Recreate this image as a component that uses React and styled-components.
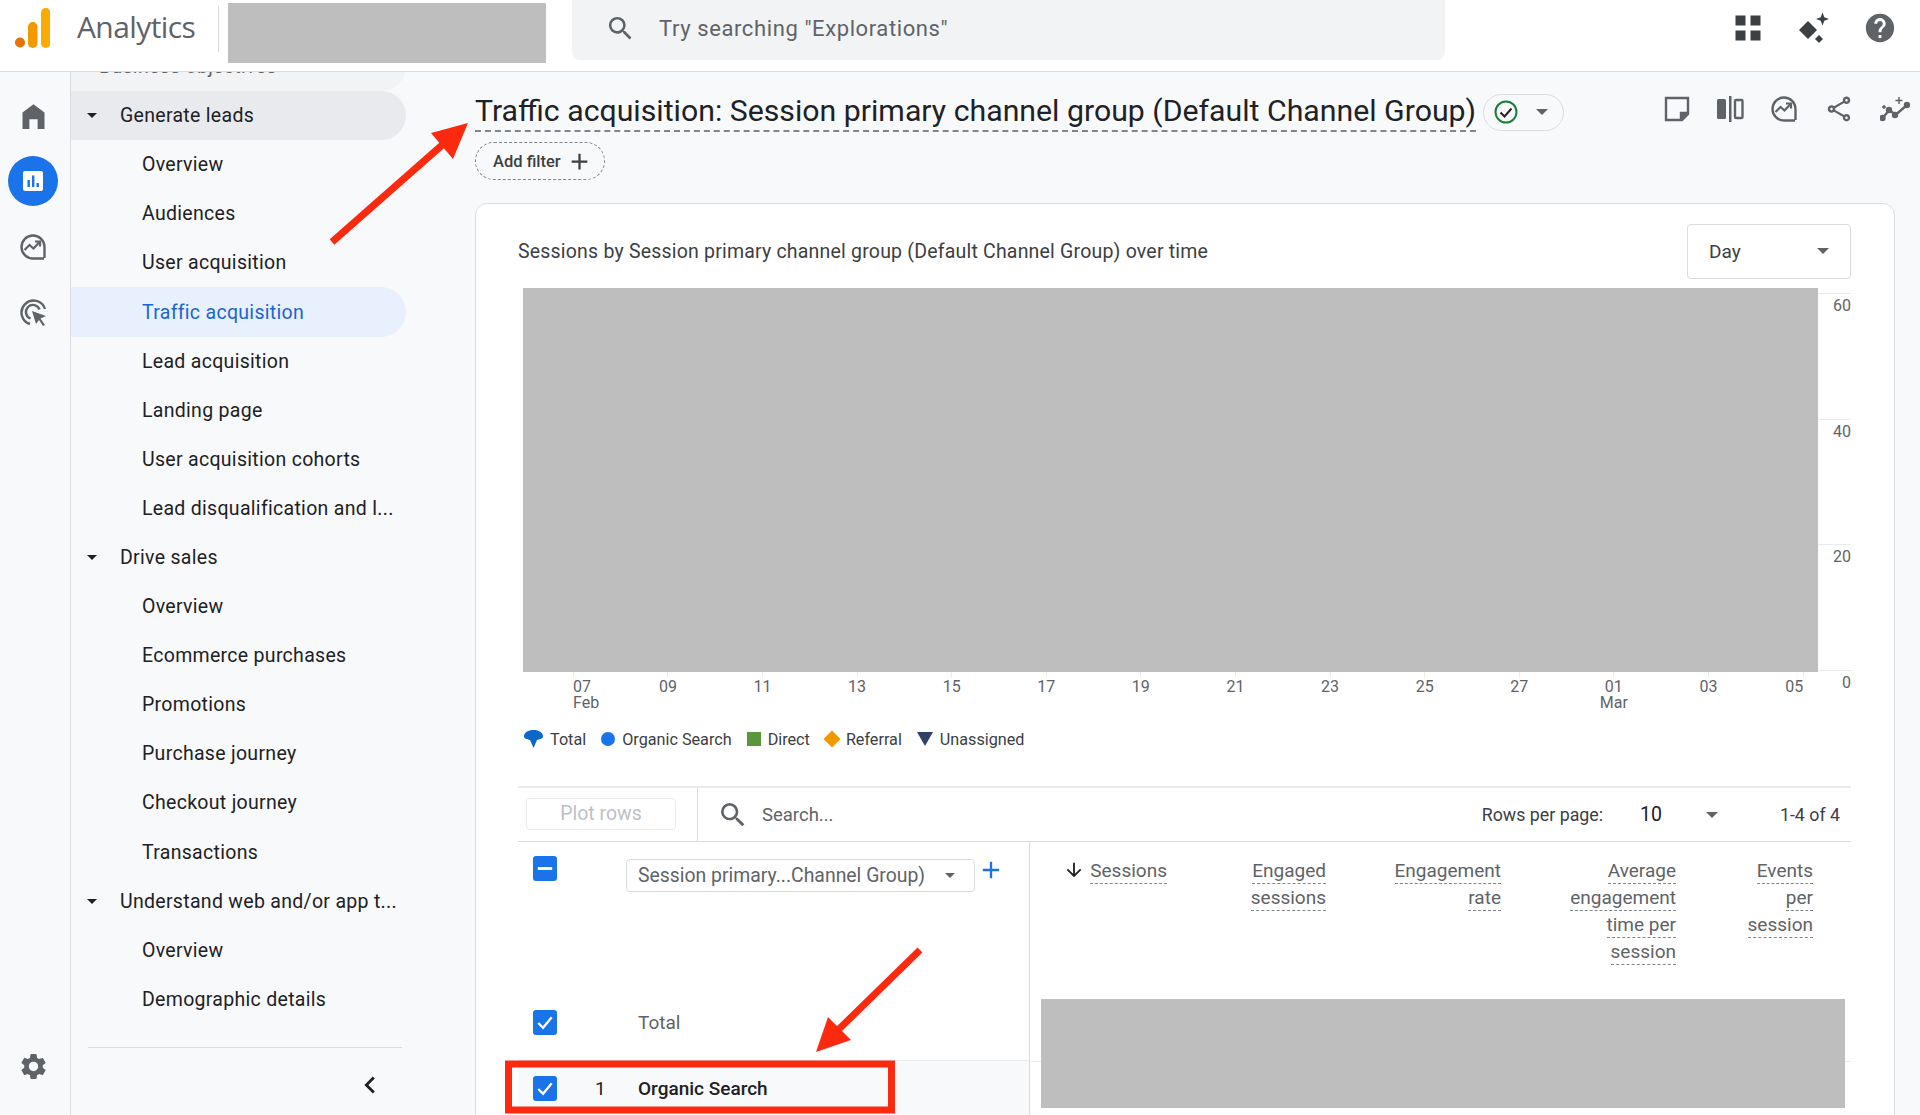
import React from 'react'
import styled, { createGlobalStyle } from 'styled-components'
import { MdSettings, MdHelp, MdSearch, MdChevronLeft, MdOutlineShare, MdAdd, MdArrowDownward } from 'react-icons/md'

const navRows = [
    { label: 'Business objectives', level: 0, faded: true },
    { label: 'Generate leads', level: 0, open: true, hilite: true },
    { label: 'Overview', level: 1 },
    { label: 'Audiences', level: 1 },
    { label: 'User acquisition', level: 1 },
    { label: 'Traffic acquisition', level: 1, active: true },
    { label: 'Lead acquisition', level: 1 },
    { label: 'Landing page', level: 1 },
    { label: 'User acquisition cohorts', level: 1 },
    { label: 'Lead disqualification and l...', level: 1 },
    { label: 'Drive sales', level: 0, open: true },
    { label: 'Overview', level: 1 },
    { label: 'Ecommerce purchases', level: 1 },
    { label: 'Promotions', level: 1 },
    { label: 'Purchase journey', level: 1 },
    { label: 'Checkout journey', level: 1 },
    { label: 'Transactions', level: 1 },
    { label: 'Understand web and/or app t...', level: 0, open: true },
    { label: 'Overview', level: 1 },
    { label: 'Demographic details', level: 1 },
]

const ticks = [
    { day: '07', month: 'Feb', align: 'first' },
    { day: '09' }, { day: '11' }, { day: '13' }, { day: '15' }, { day: '17' },
    { day: '19' }, { day: '21' }, { day: '23' }, { day: '25' }, { day: '27' },
    { day: '01', month: 'Mar' }, { day: '03' }, { day: '05', align: 'last' },
]

const columns = [
    { width: 137, lines: ['Sessions'], sorted: true },
    { width: 159, lines: ['Engaged', 'sessions'] },
    { width: 175, lines: ['Engagement', 'rate'] },
    { width: 175, lines: ['Average', 'engagement', 'time per', 'session'] },
    { width: 137, lines: ['Events', 'per', 'session'] },
]

const Logo = () => (
    <svg width="35" height="40" viewBox="0 0 35 40">
        <circle cx="5" cy="34.5" r="5" fill="#e8710a" />
        <rect x="13" y="14" width="9.5" height="26" rx="4.7" fill="#f29900" />
        <rect x="26" y="0" width="9.5" height="40" rx="4.7" fill="#f9ab00" />
    </svg>
)

const HomeIcon = () => (
    <svg width="33" height="33" viewBox="0 0 24 24" fill="#5f6368">
        <path d="M12 3L4 9v12h5v-7h6v7h5V9z" />
    </svg>
)

const ReportsIcon = () => (
    <svg width="24" height="24" viewBox="0 0 24 24">
        <rect x="2" y="2" width="20" height="20" rx="2" fill="#fff" />
        <rect x="6.5" y="11" width="2.4" height="7" fill="#1a73e8" />
        <rect x="11" y="6.5" width="2.4" height="11.5" fill="#1a73e8" />
        <rect x="15.5" y="14" width="2.4" height="4" fill="#1a73e8" />
    </svg>
)

const ExploreIcon = ({ size = 28 }) => (
    <svg width={size} height={size} viewBox="0 0 28 28" fill="none" stroke="#5f6368" strokeWidth="2.4">
        <path d="M25 25.5H14A11.5 11.5 0 1 1 25.5 14v11" />
        <path d="M5.5 17l5-5 4 3.5 6-6.5" strokeWidth="2.2" />
        <path d="M16 8.5h5v5" strokeWidth="2.2" />
    </svg>
)

const AdsIcon = () => (
    <svg width="28" height="28" viewBox="0 0 28 28" fill="none" stroke="#5f6368" strokeWidth="2.4">
        <path d="M11 26A12 12 0 1 1 26 11" />
        <path d="M11.5 20.5A7 7 0 1 1 20.5 11.5" />
        <path d="M13 13l14 5-5.5 2.5L26 27l-2 1-4-6-3 4z" fill="#5f6368" stroke="none" />
    </svg>
)

const AppsIcon = () => (
    <svg width="26" height="26" viewBox="0 0 26 26" fill="#3c4043">
        <rect x="0.5" y="0.5" width="10" height="10" />
        <rect x="15.5" y="0.5" width="10" height="10" />
        <rect x="0.5" y="15.5" width="10" height="10" />
        <rect x="15.5" y="15.5" width="10" height="10" />
    </svg>
)

const SparkleIcon = () => (
    <svg width="32" height="32" viewBox="0 0 32 32" fill="#3c4043">
        <path d="M10 9l9 9-9 9-9-9z" />
        <path d="M24.500 0.500l1.800 4.700 4.700 1.800-4.700 1.800-1.800 4.700-1.800-4.700-4.700-1.800 4.700-1.800z" />
        <path d="M21 23l4 4-4 4-4-4z" />
    </svg>
)

const NoteIcon = () => (
    <svg width="26" height="26" viewBox="0 0 26 26" fill="none" stroke="#5f6368" strokeWidth="2.4">
        <path d="M2 2h22v16l-6 6H2z" />
        <path d="M17 24v-7h7" fill="#5f6368" />
    </svg>
)

const CompareIcon = () => (
    <svg width="28" height="28" viewBox="0 0 28 28" fill="#5f6368">
        <rect x="1" y="4" width="9" height="20" rx="1.500" />
        <rect x="13" y="1" width="2.500" height="26" />
        <rect x="19" y="5" width="7.500" height="18" rx="1" fill="none" stroke="#5f6368" strokeWidth="2.400" />
    </svg>
)

const InsightsIcon = () => (
    <svg width="30" height="28" viewBox="0 0 30 28" fill="none" stroke="#5f6368" strokeWidth="2.400">
        <path d="M2.500 23l7-8 6 5 11.500-10" />
        <circle cx="2.500" cy="23" r="2" fill="#5f6368" />
        <circle cx="9" cy="15" r="2" fill="#5f6368" />
        <circle cx="15" cy="20" r="2" fill="#5f6368" />
        <circle cx="27" cy="10" r="2" fill="#5f6368" />
        <path d="M19 2v7M15.500 5.500h7M4 10v4M2 12h4" strokeWidth="1.500" />
    </svg>
)

const CheckCircle = () => (
    <svg width="24" height="24" viewBox="0 0 24 24" fill="none" stroke="#188038" strokeWidth="2">
        <circle cx="12" cy="12" r="10.500" />
        <path d="M6.500 12.500l4 4 7-8" stroke="#202124" />
    </svg>
)

const CheckBox = ({ mixed }) => (
    <BoxMark>
        <svg width="25" height="25" viewBox="0 0 25 25" fill="none" stroke="#fff" strokeWidth="2.400">
            {mixed ? <path d="M5 12.500h15" strokeWidth="3" /> : <path d="M5.500 13l5 5 9-11" />}
        </svg>
    </BoxMark>
)

const TotalMark = () => (
    <svg width="19" height="18" viewBox="0 0 19 18" fill="#0b68cb">
        <path d="M9.500 0C4 0 0 2.500 0 6.500c0 2 3 2.500 6 3.500l3.500 8 3.500-8c3-1 6-1.500 6-3.500C19 2.500 15 0 9.500 0z" />
    </svg>
)

const App = () => {
    return (
        <Page>
            <GlobalStyle />
            <TopBar>
                <LogoWrap><Logo /></LogoWrap>
                <Product>Analytics</Product>
                <TopDivider />
                <Account />
                <SearchBox>
                    <MdSearch size={31} color="#5f6368" />
                    <SearchHint>Try searching "Explorations"</SearchHint>
                </SearchBox>
                <TopIcons>
                    <TopIcon><AppsIcon /></TopIcon>
                    <TopIcon><SparkleIcon /></TopIcon>
                    <TopIcon><MdHelp size={34} color="#5f6368" /></TopIcon>
                </TopIcons>
            </TopBar>
            <Body>
                <Rail>
                    <RailSlot><HomeIcon /></RailSlot>
                    <RailSlot $active><ReportsIcon /></RailSlot>
                    <RailSlot><ExploreIcon /></RailSlot>
                    <RailSlot><AdsIcon /></RailSlot>
                    <RailGear><MdSettings size={31} color="#5f6368" /></RailGear>
                </Rail>
                <Sidebar>
                    <NavScroll>
                        {navRows.map((row, i) => (
                            <NavRow key={i} $level={row.level} $active={row.active} $hilite={row.hilite} $faded={row.faded}>
                                {row.open && <NavCaret />}
                                {row.label}
                            </NavRow>
                        ))}
                    </NavScroll>
                    <SideFooter>
                        <MdChevronLeft size={34} color="#202124" />
                    </SideFooter>
                </Sidebar>
                <Main>
                    <TitleRow>
                        <Title>Traffic acquisition: Session primary channel group (Default Channel Group)</Title>
                        <StatusChip>
                            <CheckCircle />
                            <Caret $color="#5f6368" />
                        </StatusChip>
                        <TitleTools>
                            <NoteIcon />
                            <CompareIcon />
                            <ExploreIcon size={28} />
                            <MdOutlineShare size={30} color="#5f6368" />
                            <InsightsIcon />
                        </TitleTools>
                    </TitleRow>
                    <FilterChip>Add filter <MdAdd size={27} color="#3c4043" /></FilterChip>
                    <Card>
                        <ChartHead>
                            <ChartTitle>Sessions by Session primary channel group (Default Channel Group) over time</ChartTitle>
                            <DaySelect>Day<Caret $color="#5f6368" /></DaySelect>
                        </ChartHead>
                        <ChartRow>
                            <Redacted $w={1295} $h={384} />
                            <YAxis>
                                {['60', '40', '20', '0'].map(v => <YLabel key={v}>{v}</YLabel>)}
                            </YAxis>
                        </ChartRow>
                        <XAxis>
                            {ticks.map(t => (
                                <XTick key={t.day} $align={t.align}>
                                    <span>{t.day}</span>
                                    {t.month && <span>{t.month}</span>}
                                </XTick>
                            ))}
                        </XAxis>
                        <Legend>
                            <LegendItem><TotalMark />Total</LegendItem>
                            <LegendItem><Dot />Organic Search</LegendItem>
                            <LegendItem><Square />Direct</LegendItem>
                            <LegendItem><Diamond />Referral</LegendItem>
                            <LegendItem><Triangle />Unassigned</LegendItem>
                        </Legend>
                        <TableBar>
                            <PlotCell><PlotButton>Plot rows</PlotButton></PlotCell>
                            <TableSearch>
                                <MdSearch size={32} color="#5f6368" />
                                <span>Search...</span>
                            </TableSearch>
                            <Pager>
                                <span>Rows per page:</span>
                                <PageSize>10</PageSize>
                                <Caret $color="#5f6368" />
                                <PageRange>1-4 of 4</PageRange>
                            </Pager>
                        </TableBar>
                        <TableBody>
                            <DimCol>
                                <DimHead>
                                    <CheckBox mixed />
                                    <DimSelect>Session primary...Channel Group)<Caret $color="#5f6368" $small /></DimSelect>
                                    <MdAdd size={28} color="#1a73e8" />
                                </DimHead>
                                <DimRow $h={62}>
                                    <CheckBox />
                                    <RowName $muted>Total</RowName>
                                </DimRow>
                                <DimRow $h={54} $tinted>
                                    <CheckBox />
                                    <RowIndex>1</RowIndex>
                                    <RowName>Organic Search</RowName>
                                </DimRow>
                            </DimCol>
                            <MetricCol>
                                <MetricHead>
                                    {columns.map(c => (
                                        <MetricCell key={c.lines[0]} $w={c.width}>
                                            {c.lines.map(line => (
                                                <MetricLine key={line}>
                                                    {c.sorted && <MdArrowDownward size={22} color="#202124" />}
                                                    <u>{line}</u>
                                                </MetricLine>
                                            ))}
                                        </MetricCell>
                                    ))}
                                </MetricHead>
                                <MetricData><Redacted $w={804} $h={109} /></MetricData>
                            </MetricCol>
                        </TableBody>
                    </Card>
                </Main>
            </Body>
            <Callouts width="1920" height="1115" viewBox="0 0 1920 1115">
                <path d="M332 242L449 139" stroke="#fb2a0f" strokeWidth="7" fill="none" />
                <path d="M468 123L431 133L453 159z" fill="#fb2a0f" />
                <path d="M920 950L836 1032" stroke="#fb2a0f" strokeWidth="7" fill="none" />
                <path d="M816 1052L828 1017L851 1040z" fill="#fb2a0f" />
                <rect x="508.500" y="1064" width="383" height="46" fill="none" stroke="#fb2a0f" strokeWidth="7" />
            </Callouts>
        </Page>
    )
}

export default App

const GlobalStyle = createGlobalStyle`
    html, body {
        margin: 0;
        padding: 0;
        background: #f8f9fa;
        font-family: Roboto, "Liberation Sans", sans-serif;
        color: #202124;
    }
    * { box-sizing: border-box; }
`;

const Page = styled.div`
    position: relative;
    width: 1920px;
    height: 1115px;
    overflow: hidden;
    display: flex;
    flex-direction: column;
`;
const TopBar = styled.header`
    height: 72px;
    flex: none;
    display: flex;
    background: #fff;
    border-bottom: 1px solid #dadce0;
    position: relative;
    z-index: 2;
`;
const LogoWrap = styled.div`
    padding: 8px 0 0 15px;
`;
const Product = styled.div`
    margin: 7px 0 0 27px;
    width: 137px;
    font-family: "Open Sans", sans-serif;
    font-size: 30px;
    line-height: 40px;
    letter-spacing: -0.6px;
    color: #5f6368;
`;
const TopDivider = styled.div`
    width: 1px;
    height: 46px;
    margin: 6px 9px 0 4px;
    background: #dadce0;
`;
const Account = styled.div`
    width: 318px;
    height: 60px;
    margin-top: 3px;
    background: #bebebe;
`;
const SearchBox = styled.div`
    width: 873px;
    height: 60px;
    margin-left: 26px;
    padding: 0 0 3px 33px;
    display: flex;
    align-items: center;
    gap: 23px;
    background: #f1f3f4;
    border-radius: 0 0 8px 8px;
`;
const SearchHint = styled.span`
    font-size: 22px;
    letter-spacing: 0.6px;
    color: #5f6368;
`;
const TopIcons = styled.div`
    margin-left: auto;
    height: 56px;
    padding-right: 23px;
    display: flex;
    align-items: center;
    gap: 32px;
`;
const TopIcon = styled.div`
    width: 34px;
    display: flex;
    justify-content: center;
`;
const Body = styled.div`
    flex: 1;
    min-height: 0;
    display: flex;
`;
const Rail = styled.nav`
    width: 71px;
    flex: none;
    display: flex;
    flex-direction: column;
    align-items: center;
    padding: 19px 4px 0 0;
    gap: 15.300px;
    border-right: 1px solid #dadce0;
`;
const RailSlot = styled.div`
    width: 50px;
    height: 50px;
    display: flex;
    align-items: center;
    justify-content: center;
    border-radius: 50%;
    background: ${p => (p.$active ? '#1a73e8' : 'transparent')};
`;
const RailGear = styled(RailSlot)`
    margin-top: auto;
    margin-bottom: 24px;
`;
const Sidebar = styled.aside`
    width: 404px;
    flex: none;
    display: flex;
    flex-direction: column;
`;
const NavScroll = styled.div`
    height: 975px;
    overflow: hidden;
    width: 335px;
    flex: none;
    & > :first-child { margin-top: -30px; }
`;
const NavRow = styled.div`
    position: relative;
    height: 49.100px;
    display: flex;
    align-items: center;
    padding-left: ${p => (p.$faded ? '28px' : p.$level ? '71px' : '49px')};
    font-size: 19.500px;
    letter-spacing: 0.3px;
    color: ${p => (p.$active ? '#1967d2' : p.$faded ? '#5f6368' : '#202124')};
    background: ${p => (p.$active ? '#e8f0fe' : p.$hilite ? '#e8eaed' : p.$faded ? '#f1f3f4' : 'transparent')};
    border-radius: 0 25px 25px 0;
`;
const NavCaret = styled.i`
    position: absolute;
    left: 16px;
    top: 22px;
    border-style: solid;
    border-width: 5px 5px 0 5px;
    border-color: #202124 transparent transparent transparent;
`;
const SideFooter = styled.div`
    margin: 0 0 0 17px;
    width: 314px;
    flex: 1;
    border-top: 1px solid #dadce0;
    display: flex;
    justify-content: flex-end;
    padding: 20px 15px 0 0;
`;
const Main = styled.main`
    flex: 1;
    min-width: 0;
    padding: 19px 25px 0 0;
`;
const TitleRow = styled.div`
    height: 40px;
    display: flex;
    align-items: center;
`;
const Title = styled.h1`
    margin: 0;
    font-size: 30.250px;
    font-weight: 400;
    line-height: 39px;
    white-space: nowrap;
    border-bottom: 2px dashed #80868b;
    color: #202124;
    width: 1001px;
`;
const StatusChip = styled.div`
    width: 81px;
    height: 37px;
    margin: 2px 0 0 7px;
    padding: 0 15px 0 10px;
    display: flex;
    align-items: center;
    justify-content: space-between;
    border: 1px solid #dadce0;
    border-radius: 19px;
`;
const Caret = styled.i`
    display: block;
    flex: none;
    border-style: solid;
    border-width: ${p => (p.$small ? '5px 5px 0 5px' : '6px 6.500px 0 6.500px')};
    border-color: ${p => p.$color} transparent transparent transparent;
`;
const TitleTools = styled.div`
    margin-left: auto;
    display: flex;
    align-items: center;
    gap: 26px;
    margin-right: -15px;
    margin-top: -4px;
`;
const FilterChip = styled.div`
    width: 130px;
    height: 38px;
    margin-top: 11px;
    padding: 0 0 0 17px;
    display: flex;
    align-items: center;
    gap: 5px;
    font-size: 16.500px;
    font-weight: 500;
    color: #3c4043;
    border: 1px dashed #80868b;
    border-radius: 19px;
`;
const Card = styled.section`
    margin-top: 23px;
    height: 960px;
    padding: 19px 43px 0 42px;
    background: #fff;
    border: 1px solid #dadce0;
    border-radius: 12px;
`;
const ChartHead = styled.div`
    display: flex;
    align-items: center;
    justify-content: space-between;
    height: 56px;
`;
const ChartTitle = styled.div`
    font-size: 19.500px;
    letter-spacing: 0.2px;
    color: #3c4043;
`;
const DaySelect = styled.div`
    width: 164px;
    height: 55px;
    padding: 0 21px;
    display: flex;
    align-items: center;
    justify-content: space-between;
    font-size: 19px;
    border: 1px solid #dadce0;
    border-radius: 4px;
    color: #3c4043;
`;
const ChartRow = styled.div`
    display: flex;
    height: 384px;
    margin: 9px 0 0 5px;
`;
const Redacted = styled.div`
    width: ${p => p.$w}px;
    height: ${p => p.$h}px;
    flex: none;
    background: #bebebe;
`;
const YAxis = styled.div`
    flex: 1;
    height: 384px;
    padding-top: 5px;
`;
const YLabel = styled.div`
    height: 125.500px;
    padding-top: 3px;
    text-align: right;
    font-size: 16px;
    line-height: 18px;
    color: #5f6368;
    border-top: 1px solid #e8eaed;
`;
const XAxis = styled.div`
    display: flex;
    margin-left: 8px;
`;
const XTick = styled.div`
    width: 94.600px;
    flex: none;
    display: flex;
    flex-direction: column;
    align-items: ${p => (p.$align === 'first' ? 'flex-start' : p.$align === 'last' ? 'flex-end' : 'center')};
    padding-left: ${p => (p.$align === 'first' ? '47px' : '0')};
    padding-right: ${p => (p.$align === 'last' ? '47px' : '0')};
    padding-top: 7px;
    font-size: 16px;
    line-height: 16px;
    color: #5f6368;
    background: linear-gradient(#e8eaed, #e8eaed) center top / 1px 5px no-repeat;
`;
const Legend = styled.div`
    display: flex;
    align-items: center;
    gap: 15px;
    height: 28px;
    margin: 14px 0 0 6px;
    font-size: 16.200px;
    color: #3c4043;
`;
const LegendItem = styled.div`
    display: flex;
    align-items: center;
    gap: 7px;
`;
const Dot = styled.i`
    width: 14px;
    height: 14px;
    border-radius: 50%;
    background: #1a73e8;
`;
const Square = styled.i`
    width: 14px;
    height: 14px;
    background: #5a973a;
`;
const Diamond = styled.i`
    width: 12px;
    height: 12px;
    margin: 0 1px;
    transform: rotate(45deg);
    background: #f29900;
`;
const Triangle = styled.i`
    border-style: solid;
    border-width: 14px 8px 0 8px;
    border-color: #2f4468 transparent transparent transparent;
`;
const TableBar = styled.div`
    height: 56px;
    margin-top: 33px;
    display: flex;
    align-items: center;
    border-top: 2px solid #e8eaed;
    border-bottom: 1px solid #dadce0;
`;
const PlotCell = styled.div`
    width: 180px;
    height: 100%;
    padding: 10px 0 0 8px;
    border-right: 1px solid #dadce0;
`;
const PlotButton = styled.div`
    width: 150px;
    height: 32px;
    line-height: 30px;
    text-align: center;
    font-size: 19.500px;
    color: #bdc1c6;
    border: 1px solid #e8eaed;
    border-radius: 4px;
`;
const TableSearch = styled.div`
    display: flex;
    align-items: center;
    gap: 13px;
    padding-left: 19px;
    font-size: 18.500px;
    color: #5f6368;
`;
const Pager = styled.div`
    margin-left: auto;
    padding-right: 11px;
    display: flex;
    align-items: center;
    font-size: 17.800px;
    color: #3c4043;
`;
const PageSize = styled.span`
    margin: 0 44px 0 37px;
    font-size: 19.500px;
    color: #202124;
`;
const PageRange = styled.span`
    margin-left: 62px;
`;
const TableBody = styled.div`
    display: flex;
`;
const DimCol = styled.div`
    width: 512px;
    flex: none;
    border-right: 1px solid #dadce0;
    height: 280px;
`;
const DimHead = styled.div`
    height: 157px;
    display: flex;
    align-items: flex-start;
    padding: 14px 0 0 15px;
`;
const BoxMark = styled.span`
    width: 24px;
    height: 25px;
    flex: none;
    display: flex;
    align-items: center;
    justify-content: center;
    background: #1a73e8;
    border-radius: 3px;
`;
const DimSelect = styled.div`
    width: 349px;
    height: 33px;
    margin: 3px 2px 0 69px;
    padding: 0 19px 0 11px;
    display: flex;
    align-items: center;
    justify-content: space-between;
    font-size: 19.400px;
    color: #5f6368;
    border: 1px solid #dadce0;
    border-radius: 4px;
`;
const DimRow = styled.div`
    height: ${p => p.$h}px;
    display: flex;
    align-items: center;
    padding: ${p => (p.$tinted ? '0 0 0 15px' : '0 0 15px 15px')};
    background: ${p => (p.$tinted ? '#f8f9fa' : 'transparent')};
    border-bottom: ${p => (p.$tinted ? 'none' : '1px solid #e8eaed')};
`;
const RowIndex = styled.span`
    width: 0;
    margin-left: 38px;
    font-size: 19px;
    color: #202124;
`;
const RowName = styled.span`
    margin-left: ${p => (p.$muted ? '81px' : '43px')};
    font-size: 19px;
    font-weight: ${p => (p.$muted ? 400 : 500)};
    color: ${p => (p.$muted ? '#5f6368' : '#202124')};
`;
const MetricCol = styled.div`
    flex: 1;
    position: relative;
    &::before {
        content: '';
        position: absolute;
        left: 0;
        right: 0;
        top: 219px;
        height: 1px;
        background: #e8eaed;
    }
`;
const MetricHead = styled.div`
    height: 157px;
    display: flex;
    padding-top: 17px;
`;
const MetricCell = styled.div`
    width: ${p => p.$w}px;
    flex: none;
    display: flex;
    flex-direction: column;
    align-items: flex-end;
`;
const MetricLine = styled.div`
    height: 27px;
    display: flex;
    align-items: flex-start;
    gap: 5px;
    font-size: 19px;
    line-height: 24px;
    color: #5f6368;
    u {
        text-decoration: none;
        border-bottom: 1.500px dashed #80868b;
        height: 25px;
    }
`;
const MetricData = styled.div`
    position: relative;
    padding-left: 11px;
`;
const Callouts = styled.svg`
    position: absolute;
    left: 0;
    top: 0;
    z-index: 3;
    pointer-events: none;
`;
